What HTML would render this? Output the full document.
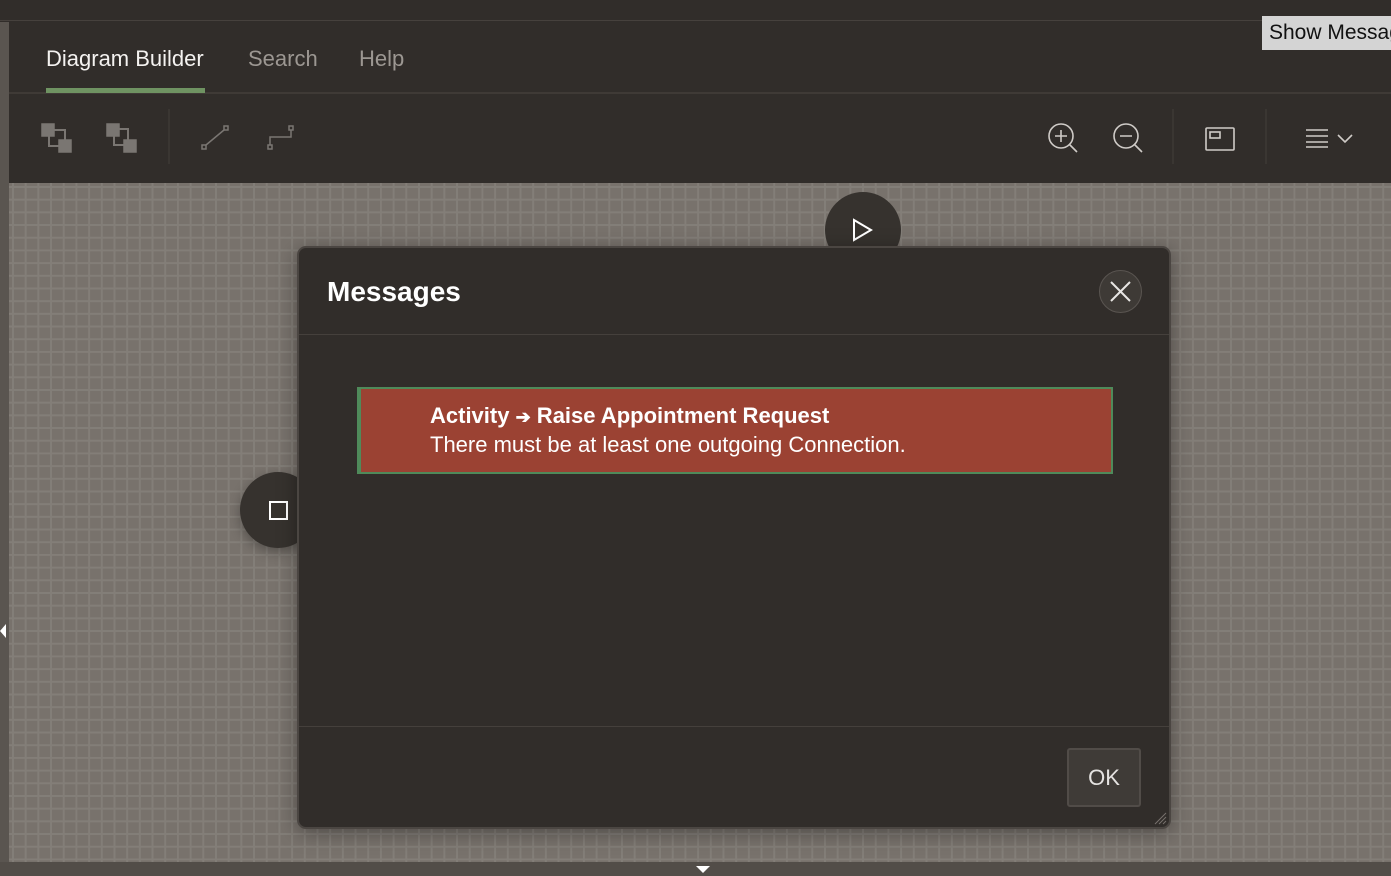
<!DOCTYPE html>
<html><head><meta charset="utf-8"><style>
*{margin:0;padding:0;box-sizing:border-box}
body{width:1391px;height:876px;overflow:hidden;background:#312d2a;font-family:"Liberation Sans",sans-serif;position:relative}
.abs{position:absolute}
.canvas{left:9px;top:183px;width:1382px;height:679px;background-color:#78726c;
background-image:linear-gradient(#837e78 2px,transparent 2px),linear-gradient(90deg,#837e78 2px,transparent 2px);background-size:12.7px 12.7px;background-position:3px 3px}
</style></head><body>
<div class="abs" style="left:0;top:0;width:1391px;height:21px;background:#312d2a;border-bottom:1px solid #46413d"></div>
<div class="abs" style="left:0;top:22px;width:9px;height:854px;background:#5a5550"></div>
<div class="abs" style="left:9px;top:22px;width:1382px;height:72px;background:#312d2a;border-bottom:2px solid #3f3a36"></div>
<div class="abs" style="left:46px;top:46px;font-size:22px;color:#f4f2f0">Diagram Builder</div>
<div class="abs" style="left:46px;top:88px;width:159px;height:5px;background:#6f9362"></div>
<div class="abs" style="left:248px;top:46px;font-size:22px;color:#9c9792">Search</div>
<div class="abs" style="left:359px;top:46px;font-size:22px;color:#9c9792">Help</div>
<div class="abs" style="left:1262px;top:16px;width:129px;height:34px;background:#d4d4d4;color:#111;font-size:21px;padding:5px 0 0 7px;white-space:nowrap;overflow:hidden">Show Messages</div>
<div class="abs" style="left:9px;top:96px;width:1382px;height:87px;background:#312d2a"></div>
<svg class="abs" style="left:0;top:96px" width="1391" height="87">
<g fill="#7a7672" stroke="#7a7672" stroke-width="1.5">
<rect x="42" y="28" width="12" height="12"/><rect x="59" y="44" width="12" height="12"/>
<rect x="49" y="34" width="16" height="16" fill="none" stroke-width="2"/>
<rect x="107" y="28" width="12" height="12"/><rect x="124" y="44" width="12" height="12"/>
<path d="M114 39v10h10M118 33h10v11" fill="none" stroke-width="2"/>
<rect x="202" y="49" width="4" height="4" fill="none"/><rect x="224" y="30" width="4" height="4" fill="none"/><path d="M206 49l18-15" fill="none"/>
<rect x="268" y="49" width="4" height="4" fill="none"/><rect x="289" y="30" width="4" height="4" fill="none"/><path d="M270 49v-8h21v-7" fill="none"/>
</g>
<path d="M169 13v55M1173 13v55M1266 13v55" stroke="#433e3a"/>
<g fill="none" stroke="#cfcbc7" stroke-width="1.6">
<circle cx="1061" cy="40" r="12"/><path d="M1069 48l8 8M1055 40h12M1061 34v12"/>
<circle cx="1126" cy="40" r="12"/><path d="M1134 48l8 8M1120 40h12"/>
<rect x="1206" y="32" width="28" height="22" rx="1"/><rect x="1210" y="36" width="10" height="6"/>
<path d="M1306 34h22M1306 40h22M1306 46h22M1306 51h22M1338 39l7 7 7-7"/>
</g>
</svg>
<div class="abs canvas"></div>
<div class="abs" style="left:0;top:862px;width:1391px;height:14px;background:#524d48"></div>
<div class="abs" style="left:696px;top:866px;width:0;height:0;border-left:7px solid transparent;border-right:7px solid transparent;border-top:7px solid #fff"></div>
<div class="abs" style="left:0;top:624px;width:0;height:0;border-top:7px solid transparent;border-bottom:7px solid transparent;border-right:6px solid #fff"></div>
<div class="abs" style="left:825px;top:192px;width:76px;height:76px;border-radius:50%;background:#36322e"></div>
<svg class="abs" style="left:850px;top:217px" width="26" height="26"><path d="M4 3l17 10-17 10z" fill="none" stroke="#fff" stroke-width="2"/></svg>
<div class="abs" style="left:240px;top:472px;width:76px;height:76px;border-radius:50%;background:#36322e;box-shadow:0 4px 12px rgba(0,0,0,.3)"></div>
<div class="abs" style="left:269px;top:501px;width:19px;height:19px;border:2px solid #fff"></div>
<div class="abs" style="left:297px;top:246px;width:874px;height:583px;background:#312d2a;border:2px solid #4b4642;border-radius:9px;box-shadow:0 4px 20px rgba(0,0,0,.35)">
 <div class="abs" style="left:28px;top:28px;font-size:28px;font-weight:bold;color:#fff">Messages</div>
 <div class="abs" style="left:800px;top:22px;width:43px;height:43px;border-radius:50%;background:#3e3a36;border:1px solid #5a5551"></div>
 <svg class="abs" style="left:810px;top:32px" width="23" height="23"><path d="M2 2l19 19M21 2L2 21" stroke="#e8e6e4" stroke-width="2"/></svg>
 <div class="abs" style="left:0;top:86px;width:870px;height:1px;background:#45403c"></div>
 <div class="abs" style="left:58px;top:139px;width:756px;height:87px;background:#9b4233;border:2px solid #4f8a5a;border-left-width:4px"></div>
 <div class="abs" style="left:131px;top:155px;font-size:22px;font-weight:bold;color:#fff">Activity <span style="font-size:18px">➔</span> Raise Appointment Request</div>
 <div class="abs" style="left:131px;top:184px;font-size:22px;color:#fff">There must be at least one outgoing Connection.</div>
 <div class="abs" style="left:0;top:478px;width:870px;height:1px;background:#45403c"></div>
 <div class="abs" style="left:768px;top:500px;width:74px;height:59px;background:#3f3b37;border:2px solid #514c48;border-radius:3px;color:#e4e2e0;font-size:22px;text-align:center;line-height:55px">OK</div>
 <svg class="abs" style="left:854px;top:563px" width="14" height="14"><path d="M2 13L13 2M6 13l7-7M10 13l3-3" stroke="#77726d" stroke-width="1"/></svg>
</div>
</body></html>
